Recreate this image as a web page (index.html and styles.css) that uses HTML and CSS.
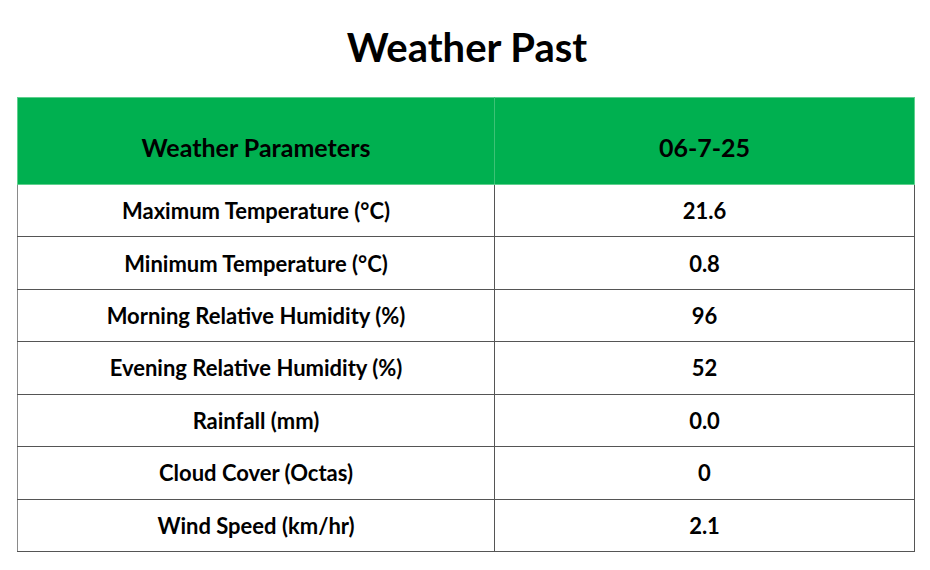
FILE: index.html
```html
<!DOCTYPE html>
<html lang="en">
<head>
<meta charset="utf-8">
<title>Weather Past</title>
<link rel="stylesheet" href="styles.css">
</head>
<body>
<main class="page">
  <h1 class="title">Weather Past</h1>
  <table class="weather">
    <thead>
      <tr>
        <th class="col-param">Weather Parameters</th>
        <th class="col-value">06-7-25</th>
      </tr>
    </thead>
    <tbody>
      <tr><td>Maximum Temperature (°C)</td><td>21.6</td></tr>
      <tr><td>Minimum Temperature (°C)</td><td>0.8</td></tr>
      <tr><td>Morning Relative Humidity (%)</td><td>96</td></tr>
      <tr><td>Evening Relative Humidity (%)</td><td>52</td></tr>
      <tr><td>Rainfall (mm)</td><td>0.0</td></tr>
      <tr><td>Cloud Cover (Octas)</td><td>0</td></tr>
      <tr><td>Wind Speed (km/hr)</td><td>2.1</td></tr>
    </tbody>
  </table>
</main>
</body>
</html>
```
FILE: styles.css
```css
html, body {
  margin: 0;
  padding: 0;
  background: #ffffff;
}

body {
  font-family: Lato, "Open Sans", "Liberation Sans", sans-serif;
  color: #000000;
  width: 930px;
  height: 570px;
  overflow: hidden;
}

.page {
  padding: 0 15px 0 17px;
}

.title {
  margin: 0;
  height: 97px;
  box-sizing: border-box;
  padding-top: 22px;
  padding-left: 2px;
  text-align: center;
  font-size: 40px;
  font-weight: 700;
  line-height: 50px;
}

.weather {
  width: 898px;
  border-collapse: collapse;
  table-layout: fixed;
}

.weather th {
  background: #00b050;
  height: 87px;
  font-size: 25px;
  font-weight: 700;
  padding: 12px 0 0;
  text-align: center;
  vertical-align: middle;
  border: 1px solid #5fd08e;
  box-sizing: border-box;
}

.weather .col-param {
  width: 477px;
  border-right-color: #3cc275;
}

.weather td {
  height: 52.43px;
  box-sizing: border-box;
  font-size: 22px;
  font-weight: 700;
  text-align: center;
  vertical-align: middle;
  padding: 0;
  border: 1px solid #555555;
}

.weather td:first-child {
  border-left-color: #8a8a8a;
}

.weather tbody tr:first-child td {
  border-top: 0;
}
```
